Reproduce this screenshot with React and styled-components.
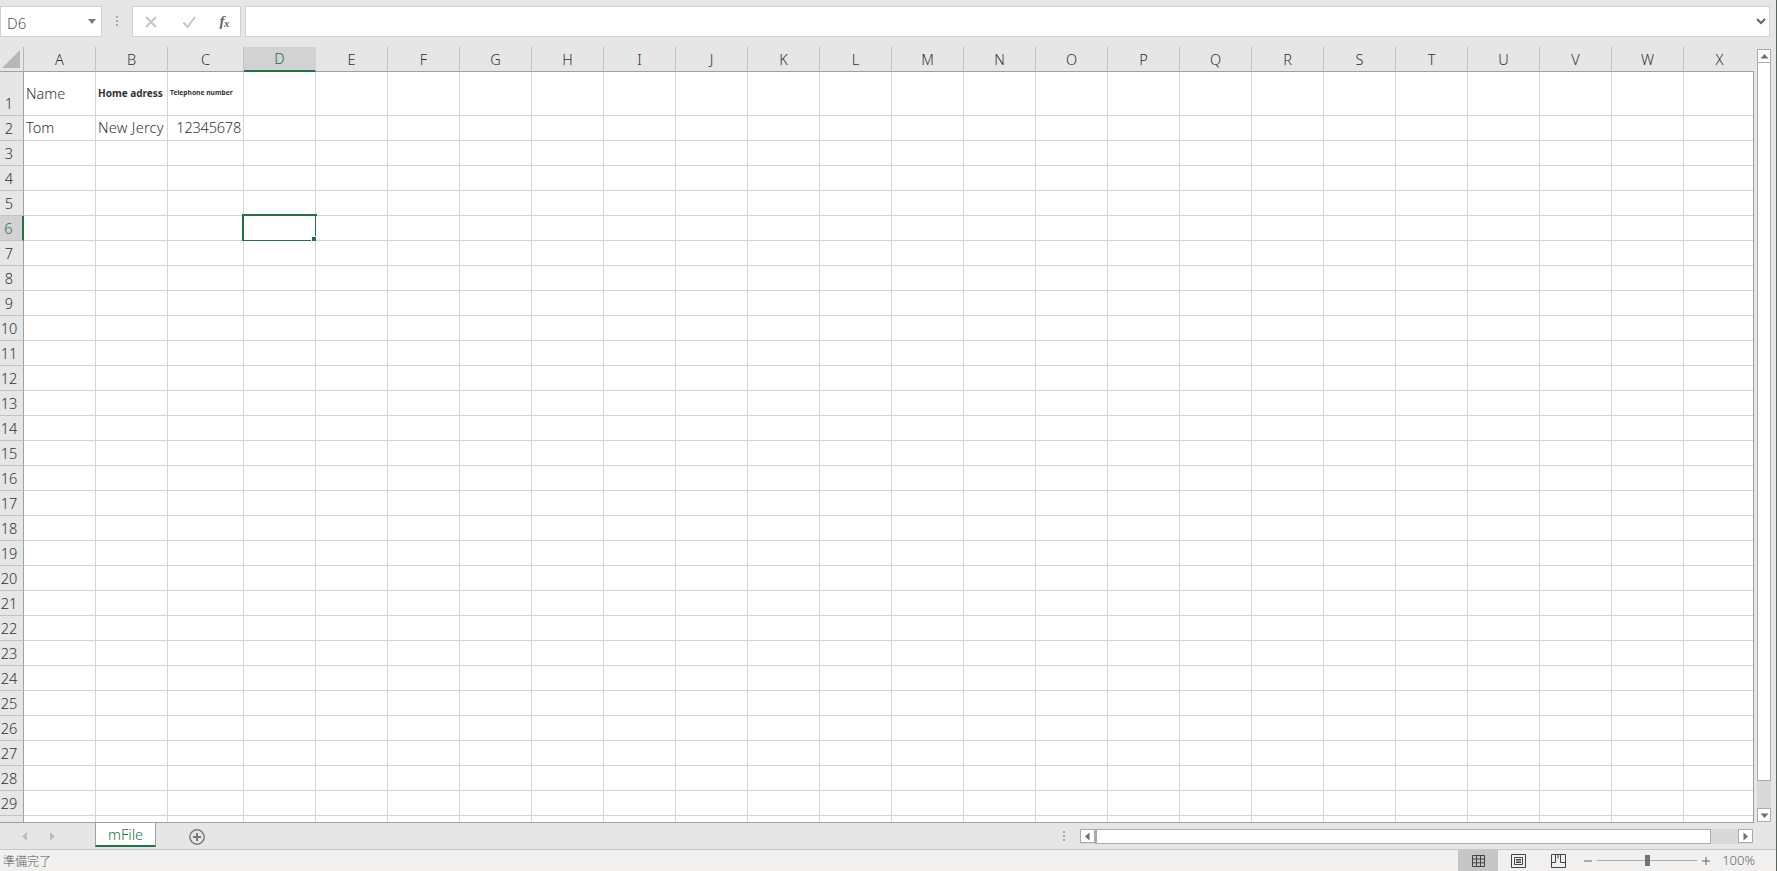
import React from "react";
import styled, { createGlobalStyle } from "styled-components";

const GREEN = "#217346";
const UI_FONT = `"Noto Sans", "Noto Sans CJK JP", sans-serif`;

const Global = createGlobalStyle`
  html, body { margin: 0; padding: 0; height: 100%; overflow: hidden; background: #e6e6e6; }
  #root { height: 100%; }
  * { box-sizing: border-box; }
`;

const Page = styled.div`
  display: flex; flex-direction: column; height: 871px; width: 1777px; overflow: hidden;
  font-family: ${UI_FONT}; font-weight: 300; color: #333; background: #e6e6e6;
  border-right: 1px solid #55665a;
`;

/* formula bar */
const FormulaBar = styled.div`
  display: flex; align-items: flex-start; height: 47px; flex: none; padding-top: 6px; background: #e6e6e6;
`;
const NameBox = styled.div`
  flex: none; width: 102px; height: 31px; background: #fff;
  border: 1px solid #d0d0d0; display: flex; align-items: center; justify-content: space-between;
  padding: 3px 5px 0 6px; font-size: 15px; color: #555;
`;
const Caret = styled.svg`width: 8px; height: 5px; fill: #7a7a7a; margin-bottom: 4px;`;
const Grip = styled.svg`width: 3px; height: 11px; fill: #a8a8a8; flex: none; margin: 10px 13px 0 14px;`;
const FormulaButtons = styled.div`
  flex: none; width: 109px; height: 31px; background: #fff; border: 1px solid #d0d0d0;
  display: flex; align-items: center; justify-content: space-between; padding: 0 11px 0 11px;
`;
const FormulaIcon = styled.svg`width: 14px; height: 14px; fill: none; stroke: #c6c6c6; stroke-width: 2;`;
const Fx = styled.span`
  font-family: "Liberation Serif", serif; font-style: italic; font-weight: 700; font-size: 15px; color: #666;
  line-height: 1; letter-spacing: -0.5px;
  sub { font-size: 11px; vertical-align: -1px; }
`;
const FormulaInput = styled.div`
  flex: none; width: 1525px; height: 31px; margin-left: 4px; background: #fff; border: 1px solid #d0d0d0;
  display: flex; align-items: center; justify-content: flex-end; padding-right: 3px;
`;
const Chevron = styled.svg`width: 10px; height: 7px; fill: none; stroke: #666; stroke-width: 2;`;

/* sheet */
const SheetArea = styled.div`display: flex; flex: none; height: 775px;`;
const Grid = styled.div`
  flex: none; width: 1753px; height: 775px; overflow: hidden; display: grid; background: #fff;
  grid-template-columns: 24px 72px 72px 76px repeat(21, 72px);
  grid-template-rows: 25px 44px repeat(29, 25px) 25px;
`;
const GridEdge = styled.div`flex: none; width: 1px; margin-top: 24px; background: #9f9f9f;`;
const Corner = styled.div`
  background: #e6e6e6; border-right: 1px solid #b5b5b5; border-bottom: 1px solid #9f9f9f;
  display: flex; align-items: center; justify-content: center;
`;
const CornerMark = styled.svg`width: 18px; height: 18px; fill: #b7b7b7; margin-right: 2px;`;
const ColHeader = styled.div`
  background: ${p => (p.$active ? "#d2d2d2" : "#e6e6e6")};
  color: ${p => (p.$active ? GREEN : "#333")};
  border-right: 1px solid ${p => (p.$active ? "#d2d2d2" : "#c2c2c2")};
  border-bottom: ${p => (p.$active ? `2px solid ${GREEN}` : "1px solid #9f9f9f")};
  display: flex; align-items: center; justify-content: center;
  font-size: 14.5px; line-height: 1;
`;
const RowHeader = styled.div`
  background: ${p => (p.$active ? "#d2d2d2" : "#e6e6e6")};
  color: ${p => (p.$active ? GREEN : "#333")};
  border-right: ${p => (p.$active ? `2px solid ${GREEN}` : "1px solid #9f9f9f")};
  border-bottom: 1px solid #c2c2c2;
  display: flex; align-items: flex-end; justify-content: center;
  font-size: 14.5px; line-height: 22px; padding: 0 5px 1px 0;
`;
const Cell = styled.div`
  position: relative; background: #fff; min-width: 0;
  border-right: 1px solid #d4d4d4; border-bottom: 1px solid #d4d4d4;
  display: flex; align-items: center; white-space: nowrap; overflow: visible;
  justify-content: ${p => (p.$right ? "flex-end" : "flex-start")};
  padding: ${p => (p.$right ? "0 2px 2px 0" : "0 0 2px 2px")};
  font-size: ${p => p.$size || 14.5}px;
  font-weight: ${p => (p.$bold ? 700 : 300)};
  color: #333;
  letter-spacing: ${p => p.$spacing || 0}px;
`;
const Selection = styled.div`
  position: absolute; top: -2px; left: -2px; right: -2px; bottom: -2px; border: 2px solid ${GREEN}; pointer-events: none;
  &::after {
    content: ""; position: absolute; right: -4px; bottom: -4px; width: 6px; height: 6px;
    background: ${GREEN}; border: 1px solid #fff;
  }
`;

/* vertical scrollbar */
const VScroll = styled.div`
  flex: none; width: 14px; margin: 2px 0 0 3px; height: 773px; background: #d8d8d8;
  display: flex; flex-direction: column;
`;
const ScrollButton = styled.div`
  flex: none; width: ${p => (p.$wide ? "15px" : "14px")}; height: 14px; background: #fff; border: 1px solid #ababab;
  display: flex; align-items: center; justify-content: center;
`;
const Arrow = styled.svg`width: 9px; height: 9px; fill: #6f6f6f;`;
const VThumb = styled.div`flex: none; height: 718px; background: #fff; border: 1px solid #ababab; border-top: 0;`;
const VTrack = styled.div`flex: 1;`;

/* tabs */
const TabBar = styled.div`display: flex; flex: none; height: 28px; background: #e6e6e6; border-bottom: 1px solid #c6c6c6;`;
const TabStrip = styled.div`
  flex: none; width: 1754px; display: flex; align-items: flex-start; border-top: 1px solid #9f9f9f;
`;
const TabNav = styled.div`flex: none; width: 95px; height: 26px; display: flex; align-items: center; padding-left: 21px; gap: 21px;`;
const NavArrow = styled.svg`width: 7px; height: 9px; fill: #bdbdbd;`;
const Tab = styled.div`
  flex: none; width: 61px; height: 25px; margin-top: -1px; padding-top: 1px; background: #fff; color: ${GREEN};
  border: 1px solid #9f9f9f; border-bottom: 2px solid ${GREEN}; border-top: 1px solid #9f9f9f;
  display: flex; align-items: center; justify-content: center; font-size: 14.5px; line-height: 1;
`;
const AddSheet = styled.svg`width: 16px; height: 16px; flex: none; margin: 6px 0 0 33px; fill: none; stroke: #777; stroke-width: 1.4;`;
const TabGrip = styled.svg`width: 3px; height: 11px; fill: #a8a8a8; flex: none; margin: 8px 0 0 858px;`;
const HScroll = styled.div`
  flex: none; width: 673px; height: 15px; margin: 6px 0 0 14px; background: #d8d8d8; display: flex;
`;
const HThumb = styled.div`flex: none; width: 616px; background: #fff; border: 1px solid #ababab; border-left-width: 2px;`;

/* status bar */
const StatusBar = styled.div`
  flex: 1; background: #f1f0ef; display: flex; align-items: stretch; padding-right: 21px;
  font-size: 12px; color: #555; line-height: 1;
`;
const StatusText = styled.div`
  flex: none; display: flex; align-items: center; padding-left: 3px; font-family: "Noto Sans CJK JP", sans-serif;
`;
const ViewGroup = styled.div`display: flex; margin-left: auto;`;
const ViewButton = styled.div`
  width: 40px; display: flex; align-items: center; justify-content: center;
  background: ${p => (p.$active ? "#c6c6c6" : "transparent")};
`;
const ViewIcon = styled.svg`width: 15px; height: 14px; fill: none; stroke: #444; stroke-width: 1;`;
const Zoom = styled.div`display: flex; align-items: center; margin-left: 6px; gap: 5px;`;
const ZoomSign = styled.svg`width: 8px; height: 8px; stroke: #666; stroke-width: 1;`;
const Slider = styled.div`
  position: relative; width: 100px; height: 1px; background: #aaa;
  &::after { content: ""; position: absolute; left: 48px; top: -5px; width: 5px; height: 11px; background: #737373; }
`;
const Percent = styled.div`flex: none; display: flex; align-items: center; margin-left: 12px; font-size: 13px; color: #666;`;

const COLUMNS = "ABCDEFGHIJKLMNOPQRSTUVWX".split("");
const ROWS = Array.from({ length: 30 }, (_, i) => i + 1);
const DATA = {
  A1: { text: "Name" },
  B1: { text: "Home adress", bold: true, size: 10 },
  C1: { text: "Telephone number", bold: true, size: 6.7 },
  A2: { text: "Tom" },
  B2: { text: "New Jercy", spacing: 0.25 },
  C2: { text: "12345678", right: true, spacing: -0.2 },
};

export default function App() {
  return (
    <Page>
      <Global />
      <FormulaBar>
        <NameBox>
          D6
          <Caret viewBox="0 0 8 5"><path d="M0 0h8L4 5z" /></Caret>
        </NameBox>
        <Grip viewBox="0 0 3 11"><rect width="2" height="2" x="0" y="0" /><rect width="2" height="2" x="0" y="4" /><rect width="2" height="2" x="0" y="8" /></Grip>
        <FormulaButtons>
          <FormulaIcon viewBox="0 0 14 14"><path d="M2 2l10 10M12 2L2 12" /></FormulaIcon>
          <FormulaIcon viewBox="0 0 14 14"><path d="M1.5 7.5l4 4.5L13 2" /></FormulaIcon>
          <Fx>f<sub>x</sub></Fx>
        </FormulaButtons>
        <FormulaInput>
          <Chevron viewBox="0 0 10 7"><path d="M1 1l4 4 4-4" /></Chevron>
        </FormulaInput>
      </FormulaBar>

      <SheetArea>
        <Grid>
          <Corner>
            <CornerMark viewBox="0 0 18 18"><path d="M18 0v18H0z" /></CornerMark>
          </Corner>
          {COLUMNS.map(c => (
            <ColHeader key={c} $active={c === "D"}>{c}</ColHeader>
          ))}
          {ROWS.map(r => (
            <React.Fragment key={r}>
              <RowHeader $active={r === 6}>{r <= 29 ? r : ""}</RowHeader>
              {COLUMNS.map(c => {
                const d = DATA[`${c}${r}`];
                return (
                  <Cell key={c} $right={d?.right} $bold={d?.bold} $size={d?.size} $spacing={d?.spacing}>
                    {d?.text}
                    {c === "D" && r === 6 && <Selection />}
                  </Cell>
                );
              })}
            </React.Fragment>
          ))}
        </Grid>
        <GridEdge />
        <VScroll>
          <ScrollButton><Arrow viewBox="0 0 9 9"><path d="M0.5 6.5h8L4.5 2z" /></Arrow></ScrollButton>
          <VThumb />
          <VTrack />
          <ScrollButton><Arrow viewBox="0 0 9 9"><path d="M0.5 2.5h8L4.5 7z" /></Arrow></ScrollButton>
        </VScroll>
      </SheetArea>

      <TabBar>
        <TabStrip>
          <TabNav>
            <NavArrow viewBox="0 0 7 9"><path d="M6 0v9L1 4.5z" /></NavArrow>
            <NavArrow viewBox="0 0 7 9"><path d="M1 0v9l5-4.5z" /></NavArrow>
          </TabNav>
          <Tab>mFile</Tab>
          <AddSheet viewBox="0 0 16 16"><circle cx="8" cy="8" r="7.2" /><path d="M8 4v8M4 8h8" strokeWidth="2" /></AddSheet>
          <TabGrip viewBox="0 0 3 11"><rect width="2" height="2" x="0" y="0" /><rect width="2" height="2" x="0" y="4" /><rect width="2" height="2" x="0" y="8" /></TabGrip>
          <HScroll>
            <ScrollButton $wide><Arrow viewBox="0 0 9 9"><path d="M6.5 0.5v8L2 4.5z" /></Arrow></ScrollButton>
            <HThumb />
            <VTrack />
            <ScrollButton $wide><Arrow viewBox="0 0 9 9"><path d="M2.5 0.5v8L7 4.5z" /></Arrow></ScrollButton>
          </HScroll>
        </TabStrip>
      </TabBar>

      <StatusBar>
        <StatusText>準備完了</StatusText>
        <ViewGroup>
          <ViewButton $active>
            <ViewIcon viewBox="0 0 15 14"><path d="M1.5 1.5h12v11h-12zM1.5 5h12M1.5 8.8h12M5.5 1.5v11M9.5 1.5v11" /></ViewIcon>
          </ViewButton>
          <ViewButton>
            <ViewIcon viewBox="0 0 15 14"><path d="M.5.5h14v13H.5zM3.5 3.5h8v7h-8zM5 5.5h5M5 7h5M5 8.5h5" /></ViewIcon>
          </ViewButton>
          <ViewButton>
            <ViewIcon viewBox="0 0 15 14"><path d="M.5.5h14v13H.5zM.5 8.5h4V.5M9.5.5v8h5M7 .5v4" /></ViewIcon>
          </ViewButton>
        </ViewGroup>
        <Zoom>
          <ZoomSign viewBox="0 0 8 8"><path d="M0 4h8" /></ZoomSign>
          <Slider />
          <ZoomSign viewBox="0 0 8 8"><path d="M0 4h8M4 0v8" /></ZoomSign>
        </Zoom>
        <Percent>100%</Percent>
      </StatusBar>
    </Page>
  );
}
